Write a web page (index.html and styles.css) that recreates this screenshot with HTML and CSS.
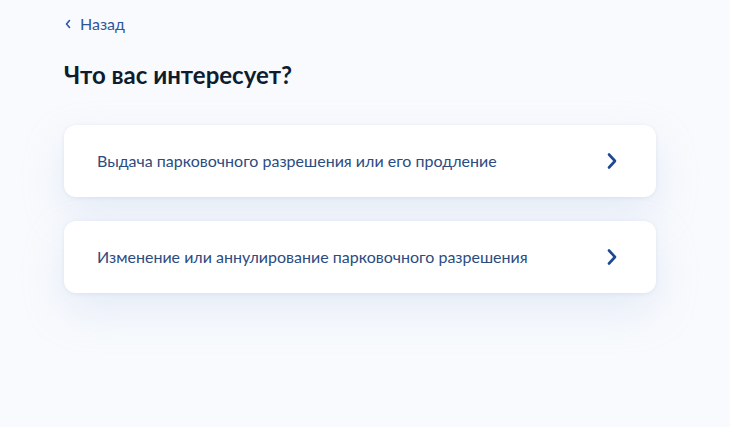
FILE: index.html
```html
<!DOCTYPE html>
<html lang="ru">
<head>
<meta charset="utf-8">
<link rel="stylesheet" href="styles.css">
</head>
<body>
<main class="page">
  <a class="back" href="#">
    <svg class="back-icon" width="8" height="10" viewBox="0 0 8 10"><path d="M5.5 1.5 L2.5 5 L5.5 8.5" fill="none" stroke="#2b55a8" stroke-width="1.6" stroke-linecap="round" stroke-linejoin="round"/></svg>
    <span>Назад</span>
  </a>
  <h1 class="title">Что вас интересует?</h1>
  <div class="list">
    <a class="card" href="#">
      <span class="card-text">Выдача парковочного разрешения или его продление</span>
      <svg class="chev" width="12" height="18" viewBox="0 0 12 18"><path d="M3 2.5 L9 9 L3 15.5" fill="none" stroke="#1e4894" stroke-width="2.6" stroke-linecap="round" stroke-linejoin="round"/></svg>
    </a>
    <a class="card" href="#">
      <span class="card-text">Изменение или аннулирование парковочного разрешения</span>
      <svg class="chev" width="12" height="18" viewBox="0 0 12 18"><path d="M3 2.5 L9 9 L3 15.5" fill="none" stroke="#1e4894" stroke-width="2.6" stroke-linecap="round" stroke-linejoin="round"/></svg>
    </a>
  </div>
</main>
</body>
</html>
```
FILE: styles.css
```css
* { box-sizing: border-box; }
html, body { margin: 0; padding: 0; }
body {
  background: #f8fafd;
  font-family: Lato, "Noto Sans", sans-serif;
  width: 730px;
  height: 427px;
  overflow: hidden;
}
.page {
  padding: 14px 74px 0 64px;
  display: flex;
  flex-direction: column;
}
.back {
  display: flex;
  align-items: center;
  gap: 8px;
  text-decoration: none;
  color: #2f5597;
  font-size: 16px;
  line-height: 20px;
  height: 20px;
}
.back-icon { display: block; }
.title {
  margin: 26px 0 0 0;
  font-size: 24px;
  line-height: 30px;
  font-weight: 700;
  color: #0f1c2e;
}
.list {
  margin-top: 35px;
  display: flex;
  flex-direction: column;
  gap: 24px;
}
.card {
  display: flex;
  align-items: center;
  justify-content: space-between;
  height: 72px;
  padding: 0 38px 0 33px;
  background: #ffffff;
  border-radius: 12px;
  text-decoration: none;
  box-shadow: 0 1px 4px rgba(150, 175, 215, 0.2), 0 18px 40px rgba(190, 205, 235, 0.3);
}
.card-text {
  font-size: 16px;
  line-height: 20px;
  color: #2c4b80;
}
.chev { display: block; }
```
